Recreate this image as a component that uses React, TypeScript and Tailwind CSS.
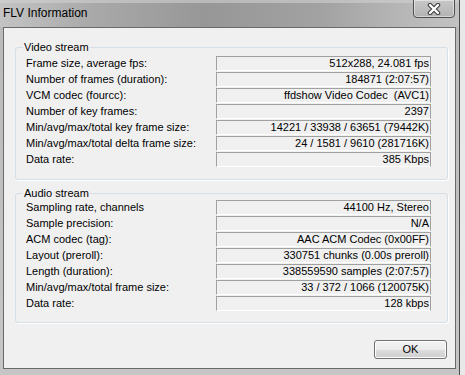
import React from "react"

const video = [
  ["Frame size, average fps:", "512x288, 24.081 fps"],
  ["Number of frames (duration):", "184871 (2:07:57)"],
  ["VCM codec (fourcc):", "ffdshow Video Codec  (AVC1)"],
  ["Number of key frames:", "2397"],
  ["Min/avg/max/total key frame size:", "14221 / 33938 / 63651 (79442K)"],
  ["Min/avg/max/total delta frame size:", "24 / 1581 / 9610 (281716K)"],
  ["Data rate:", "385 Kbps"],
]

const audio = [
  ["Sampling rate, channels", "44100 Hz, Stereo"],
  ["Sample precision:", "N/A"],
  ["ACM codec (tag):", "AAC ACM Codec (0x00FF)"],
  ["Layout (preroll):", "330751 chunks (0.00s preroll)"],
  ["Length (duration):", "338559590 samples (2:07:57)"],
  ["Min/avg/max/total frame size:", "33 / 372 / 1066 (120075K)"],
  ["Data rate:", "128 kbps"],
]

function Group({ title, rows, top, bottom }: { title: string; rows: string[][]; top: string; bottom: string }) {
  return (
    <div className={`relative w-[433px] border border-[#d5dfe5] rounded-[3px] shadow-[1px_1px_0_#fff] ${top} ${bottom}`}>
      {/* caption sits over the top border */}
      <span className="absolute left-[7px] top-[-8px] px-[1px] bg-[#f0f0f0] text-[11px] leading-[14px] text-black">
        {title}
      </span>
      <div className="flex flex-col gap-[1px]">
        {rows.map(([label, value]) => (
          <div key={label} className="flex items-center h-[15px]">
            <div className="w-[200px] pl-[10px] text-[11px] leading-[13px] text-black whitespace-nowrap">{label}</div>
            <div className="w-[215px] h-[15px] border border-[#a0a0a0] border-b-white pr-[1px] text-right text-[11px] leading-[13px] text-black whitespace-pre">
              {value}
            </div>
          </div>
        ))}
      </div>
    </div>
  )
}

export default function App() {
  return (
    <div className="w-[465px] h-[375px] flex bg-[#e8e8e8] overflow-hidden font-['Liberation_Sans',Arial,sans-serif]">
      <div className="w-[460px] h-full flex flex-col bg-[linear-gradient(to_bottom,#b9b9b9,#c6c6c6)] border-r border-[#4a4a4a]">
        {/* title bar */}
        <div className="relative h-[27px] shrink-0 bg-[linear-gradient(to_right,#c4c4c4,#a9a9a9_20%,#979797_45%,#a2a2a2_70%,#b9b9b9_90%,#c2c2c2)]">
          <div className="absolute inset-x-0 top-0 h-[3px] bg-[#d0d0d0]/60" />
          <span className="absolute left-[3px] top-[6px] text-[12px] leading-[15px] text-black">FLV Information</span>
          <div className="absolute left-[413px] top-[-1px] w-[42px] h-[19px] rounded-b-[4px] border border-[#4f4f4f] bg-[linear-gradient(to_bottom,#c8c8c8,#b2b2b2)] shadow-[inset_0_0_0_1px_rgba(255,255,255,0.45)] flex items-center justify-center">
            <svg width="14" height="12" viewBox="0 0 14 12">
              <path d="M3 2 L11 10 M11 2 L3 10" stroke="#3d3d3d" strokeWidth="4.5" strokeLinecap="round" />
              <path d="M3 2 L11 10 M11 2 L3 10" stroke="#ffffff" strokeWidth="2.4" strokeLinecap="round" />
            </svg>
          </div>
        </div>

        {/* client area */}
        <div className="ml-[3px] w-[453px] h-[342px] shrink-0 border border-[#6a6a6a] bg-[#f0f0f0] pt-[19px] pl-[11px] pr-[7px] flex flex-col">
          <Group title="Video stream" rows={video} top="pt-[8px]" bottom="pb-[12px]" />
          <div className="h-[13px] shrink-0" />
          <Group title="Audio stream" rows={audio} top="pt-[6px]" bottom="pb-[11px]" />
          <div className="mt-[13px] self-end mr-[1px]">
            <button className="w-[73px] h-[19px] rounded-[3px] border border-[#707070] bg-[linear-gradient(to_bottom,#f2f2f2,#ebebeb_50%,#dddddd_50%,#cfcfcf)] shadow-[inset_0_0_0_1px_#fcfcfc] text-[11px] leading-[15px] text-black">
              OK
            </button>
          </div>
        </div>
      </div>
    </div>
  )
}
